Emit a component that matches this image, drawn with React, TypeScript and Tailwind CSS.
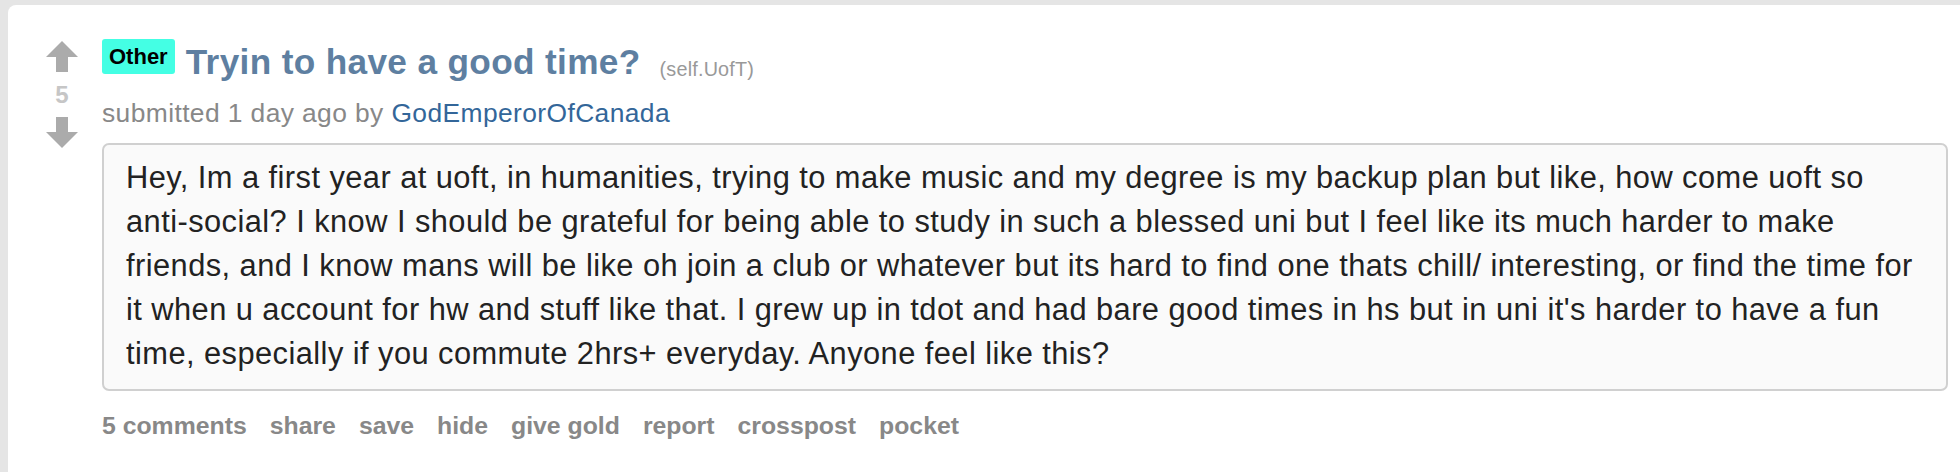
import React from 'react';

const actions = ['5 comments', 'share', 'save', 'hide', 'give gold', 'report', 'crosspost', 'pocket'];

const body =
  "Hey, Im a first year at uoft, in humanities, trying to make music and my degree is my backup plan but like, how come uoft so anti-social? I know I should be grateful for being able to study in such a blessed uni but I feel like its much harder to make friends, and I know mans will be like oh join a club or whatever but its hard to find one thats chill/ interesting, or find the time for it when u account for hw and stuff like that. I grew up in tdot and had bare good times in hs but in uni it's harder to have a fun time, especially if you commute 2hrs+ everyday. Anyone feel like this?";

// vote arrow, points up by default
const Arrow = ({ down = false }: { down?: boolean }) => (
  <svg width="32" height="31" viewBox="0 0 32 31" className={down ? 'rotate-180' : ''}>
    <path d="M16 0 L32 16 L22 16 L22 31 L10 31 L10 16 L0 16 Z" fill="#ababab" />
  </svg>
);

function App() {
  return (
    <div className="min-h-screen bg-[#e5e5e5] pt-[5px] pl-[8px] font-['Liberation_Sans',Arial,sans-serif]">
      <div className="min-h-[467px] bg-white rounded-tl-[8px] flex">
        {/* votes */}
        <div className="ml-[38px] mt-[36px] w-[32px] flex flex-col items-center">
          <Arrow />
          <div className="h-[45px] flex items-center justify-center text-[24px] leading-none font-bold text-[#c6c6c6]">
            5
          </div>
          <Arrow down />
        </div>

        <div className="ml-[24px] mr-[12px] flex-1 flex flex-col">
          <div className="mt-[34px] flex items-start">
            <span className="h-[35px] px-[7px] flex items-center rounded-[3px] bg-[#44ffe4] text-black text-[22px] font-bold leading-none">
              Other
            </span>
            <div className="ml-[11px] mt-[3px] flex items-end">
              <a className="text-[35.2px] leading-[40px] font-bold tracking-[0.35px] text-[#5e7fa1]">
                Tryin to have a good time?
              </a>
              <span className="ml-[19px] mb-[2px] text-[19.8px] leading-none tracking-[0.2px] text-[#999]">(self.UofT)</span>
            </div>
          </div>

          <div className="mt-[16px] text-[26.4px] leading-[30px] tracking-[0.4px] text-[#888]">
            submitted 1 day ago by <a className="text-[#336699]">GodEmperorOfCanada</a>
          </div>

          <div className="mt-[15px] border-2 border-[#d0d0d0] rounded-[7px] bg-[#fafafa] px-[22px] pt-[11px] pb-[13px] text-[30.8px] leading-[44px] tracking-[0.45px] text-[#222]">
            {body}
          </div>

          <div className="mt-[21px] flex gap-[23px] text-[24.8px] leading-[28px] font-bold text-[#888]">
            {actions.map((a) => (
              <a key={a}>{a}</a>
            ))}
          </div>
        </div>
      </div>
    </div>
  );
}

export default App;
